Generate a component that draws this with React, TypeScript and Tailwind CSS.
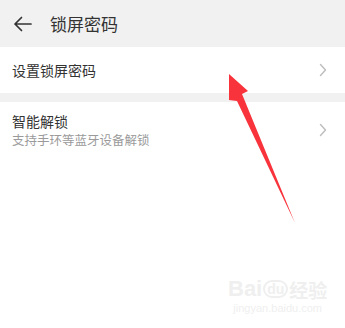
import React from "react";

function Chevron() {
  return (
    <svg width="8" height="14" viewBox="0 0 8 14" fill="none">
      <path d="M1.5 1.5 L6.5 7 L1.5 12.5" stroke="#bdbdbd" strokeWidth="1.4" strokeLinecap="round" strokeLinejoin="round" />
    </svg>
  );
}

export default function App() {
  return (
    <div
      className="relative w-[345px] h-[328px] bg-white overflow-hidden"
      style={{ fontFamily: '"Noto Sans CJK SC", "Noto Sans", sans-serif' }}
    >
      <div className="h-[47px] bg-[#f1f1f1] flex items-center">
        <svg className="ml-[13px]" width="19" height="16" viewBox="0 0 19 16" fill="none">
          <path d="M18 8 H2 M8.5 1.5 L2 8 L8.5 14.5" stroke="#333" strokeWidth="1.7" strokeLinecap="round" strokeLinejoin="round" />
        </svg>
        <span className="ml-[18px] text-[17px] text-[#333] leading-none">锁屏密码</span>
      </div>
      <div className="h-[46px] flex items-center justify-between pl-[12px] pr-[18px]">
        <span className="text-[14px] text-[#333] leading-none">设置锁屏密码</span>
        <Chevron />
      </div>
      <div className="h-[9px] bg-[#f1f1f1]" />
      <div className="h-[56px] flex items-center justify-between pl-[12px] pr-[18px]">
        <div className="flex flex-col gap-[6px]">
          <span className="text-[14px] text-[#333] leading-none">智能解锁</span>
          <span className="text-[12.5px] text-[#9a9a9a] leading-none">支持手环等蓝牙设备解锁</span>
        </div>
        <Chevron />
      </div>

      <div className="absolute left-[228px] top-[278px] flex flex-col items-center text-[#efefef] select-none">
        <div className="flex items-center leading-none">
          <span className="text-[22px] font-bold" style={{ fontFamily: '"Liberation Sans", sans-serif' }}>Bai</span>
          <span className="text-[14px] font-bold rounded-full border-2 border-[#efefef] px-[2px] mx-[1px]" style={{ fontFamily: '"Liberation Sans", sans-serif' }}>du</span>
          <span className="text-[19px] font-bold">经验</span>
        </div>
        <span className="text-[11px] leading-none mt-[3px]" style={{ fontFamily: '"Liberation Sans", sans-serif' }}>jingyan.baidu.com</span>
      </div>

      <svg className="absolute left-0 top-0" width="345" height="328" viewBox="0 0 345 328">
        <polygon points="229,74 248,91 242,94 295,223 237,101 229,100" fill="#f8333b" />
      </svg>
    </div>
  );
}
